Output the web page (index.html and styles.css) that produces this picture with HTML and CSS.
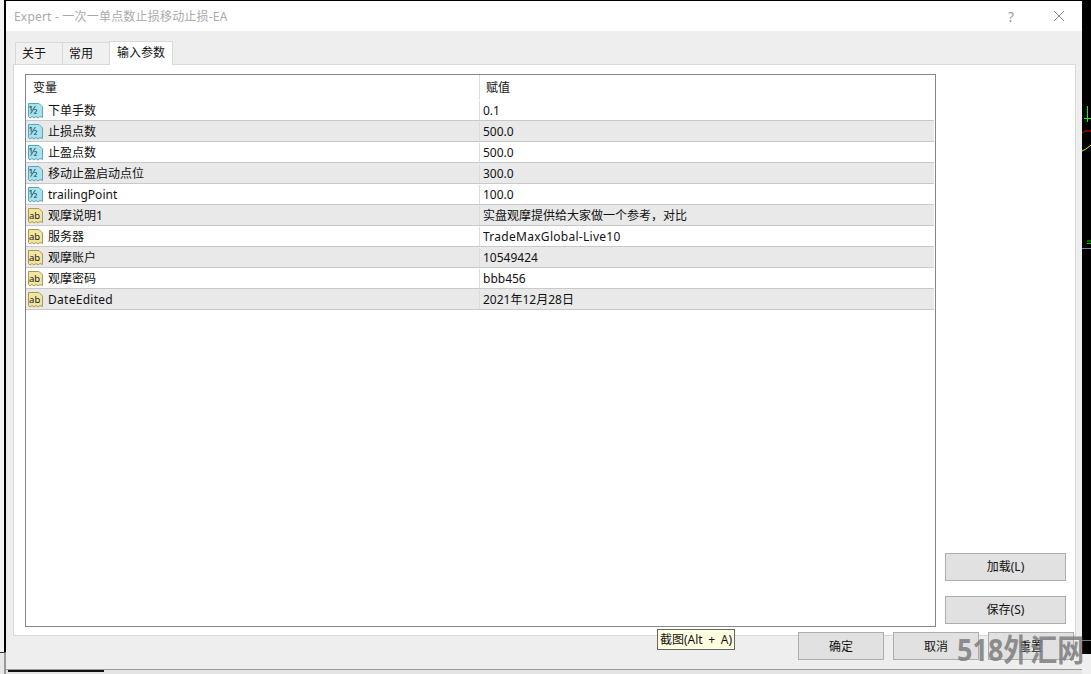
FILE: index.html
```html
<!DOCTYPE html>
<html>
<head>
    <meta charset="utf-8"/>
    <title>Expert - 一次一单点数止损移动止损-EA</title>
    <link rel="stylesheet" href="styles.css">
</head>
<body>
<svg class="defs" width="0" height="0">
    <symbol id="num" viewBox="0 0 17 18">
        <path d="M1.500 1.500H12L15.500 5V15.500L13 14.500L11 16L9 14.500L7 16L5 14.500L3 16L1.500 14.500Z" fill="#a6e3ee" stroke="#5aa5b8"/>
        <text x="2" y="11.500" font-family="Liberation Sans" font-size="11" fill="#134">½</text>
    </symbol>
    <symbol id="str" viewBox="0 0 17 18">
        <path d="M1.500 1.500H12L15.500 5V15.500L13 14.500L11 16L9 14.500L7 16L5 14.500L3 16L1.500 14.500Z" fill="#f3e5a0" stroke="#a89a50"/>
        <text x="2" y="12" font-family="Liberation Sans" font-size="9.500" fill="#222">ab</text>
    </symbol>
</svg>

<div class="left-strip"></div>
<div class="left-tick"></div>
<div class="under-line"></div>
<div class="under-black"></div>
<div class="corner"></div>
<svg class="chart" width="9" height="660" viewBox="0 0 9 660">
    <path d="M5.500 106V122M2 118.500H9" stroke="#0f0" fill="none"/>
    <path d="M0 133L3 131H9" stroke="#e00" fill="none"/>
    <path d="M0 151L4 149L9 145" stroke="#ee0" fill="none"/>
    <path d="M5 241H9M5 243.500H9" stroke="#0c0" fill="none"/>
    <path d="M0 248.500H9" stroke="#789" fill="none"/>
    <path d="M0 640.500H9" stroke="#777" fill="none"/>
</svg>

<div class="window">
    <div class="titlebar">
        <span class="title">Expert - 一次一单点数止损移动止损-EA</span>
        <span class="help">?</span>
        <svg class="close" width="12" height="12" viewBox="0 0 12 12">
            <path d="M1 1L11 11M11 1L1 11" stroke="#8a8a8a" fill="none"/>
        </svg>
    </div>
    <div class="tabs">
        <span class="tab tab-a">关于</span>
        <span class="tab tab-b">常用</span>
        <span class="tab on">输入参数</span>
    </div>
    <div class="panel">
        <div class="grid">
            <div class="head">
                <span class="c-name">变量</span>
                <span class="c-val">赋值</span>
            </div>
            <div class="row"><span class="c-name"><svg class="ico"><use href="#num"/></svg>下单手数</span><span class="c-val">0.1</span></div>
            <div class="row alt"><span class="c-name"><svg class="ico"><use href="#num"/></svg>止损点数</span><span class="c-val">500.0</span></div>
            <div class="row"><span class="c-name"><svg class="ico"><use href="#num"/></svg>止盈点数</span><span class="c-val">500.0</span></div>
            <div class="row alt"><span class="c-name"><svg class="ico"><use href="#num"/></svg>移动止盈启动点位</span><span class="c-val">300.0</span></div>
            <div class="row"><span class="c-name"><svg class="ico"><use href="#num"/></svg>trailingPoint</span><span class="c-val">100.0</span></div>
            <div class="row alt"><span class="c-name"><svg class="ico"><use href="#str"/></svg>观摩说明1</span><span class="c-val">实盘观摩提供给大家做一个参考，对比</span></div>
            <div class="row"><span class="c-name"><svg class="ico"><use href="#str"/></svg>服务器</span><span class="c-val wide">TradeMaxGlobal-Live10</span></div>
            <div class="row alt"><span class="c-name"><svg class="ico"><use href="#str"/></svg>观摩账户</span><span class="c-val">10549424</span></div>
            <div class="row"><span class="c-name"><svg class="ico"><use href="#str"/></svg>观摩密码</span><span class="c-val">bbb456</span></div>
            <div class="row alt"><span class="c-name wide"><svg class="ico"><use href="#str"/></svg>DateEdited</span><span class="c-val">2021年12月28日</span></div>
        </div>
        <div class="side">
            <span class="btn side-btn">加载(L)</span>
            <span class="btn side-btn">保存(S)</span>
        </div>
    </div>
    <div class="footer">
        <span class="btn foot-btn">确定</span>
        <span class="btn foot-btn">取消</span>
        <span class="btn foot-btn">重置</span>
    </div>
</div>

<div class="tip">截图(Alt + A)</div>
<div class="mark">518外汇网</div>
</body>
</html>
```

FILE: styles.css
```css
* {
    margin: 0;
    padding: 0;
    box-sizing: border-box;
    font-family: "Noto Sans", "Noto Sans CJK SC", sans-serif;
}
html, body {
    height: 674px;
    overflow: hidden;
}
body {
    background: #000;
    font-size: 12px;
    color: #111;
}
.defs {
    display: none;
}
.left-strip {
    position: absolute;
    left: 0;
    top: 0;
    width: 4px;
    height: 674px;
    background: #f4f4f4;
}
.left-tick {
    position: absolute;
    left: 0;
    top: 652px;
    width: 6px;
    height: 22px;
    background: #e8e8e8;
    border-top: 1px solid #333;
    border-right: 2px solid #999;
}
.under-line {
    position: absolute;
    left: 6px;
    top: 669px;
    width: 1085px;
    height: 5px;
    background: #e4e4e4;
}
.under-black {
    position: absolute;
    left: 8px;
    top: 670px;
    width: 96px;
    height: 2px;
    background: #111;
}
.corner {
    position: absolute;
    left: 1082px;
    top: 654px;
    width: 9px;
    height: 20px;
    background: #efefef;
}
.chart {
    position: absolute;
    left: 1082px;
    top: 0;
}
.window {
    position: absolute;
    left: 6px;
    top: 1px;
    width: 1076px;
    height: 669px;
    background: #eee;
    border-bottom: 1px solid #9a9a9a;
    display: flex;
    flex-direction: column;
}
.titlebar {
    height: 30px;
    flex: none;
    background: #fff;
    display: flex;
    align-items: center;
    padding: 0 17px 0 8px;
}
.title {
    flex: 1;
    color: #aaa;
    font-size: 12px;
    letter-spacing: .2px;
}
.help {
    color: #9a9a9a;
    font-size: 14px;
    margin-right: 39px;
}
.tabs {
    height: 33px;
    flex: none;
    display: flex;
    align-items: flex-end;
    padding: 0 0 0 9px;
}
.tab {
    height: 22px;
    line-height: 21px;
    padding: 0 6px;
    background: #f0f0f0;
    border: 1px solid #d9d9d9;
    border-bottom: 0;
}
.tab-a {
    width: 48px;
}
.tab-b {
    width: 48px;
    margin-left: -1px;
}
.tab.on {
    width: 64px;
    height: 24px;
    margin-left: -1px;
    margin-bottom: -1px;
    background: #fff;
    position: relative;
    z-index: 1;
    padding: 0 7px;
}
.panel {
    width: 1063px;
    height: 572px;
    flex: none;
    margin-left: 7px;
    background: #fff;
    border: 1px solid #d9d9d9;
    padding: 9px 10px 8px 11px;
    display: flex;
}
.grid {
    width: 911px;
    height: 100%;
    border: 1px solid #85858f;
    flex: none;
}
.head {
    height: 25px;
    display: flex;
    line-height: 25px;
}
.head .c-name {
    padding-left: 7px;
}
.head .c-val {
    padding-left: 6px;
}
.row {
    height: 21px;
    line-height: 20px;
    padding-top: 1px;
    display: flex;
    border-bottom: 1px solid #c9c9c9;
    margin-right: 1px;
}
.row.alt {
    background: #e9e9e9;
}
.c-name {
    width: 453px;
    flex: none;
    display: flex;
    align-items: center;
}
.c-val {
    flex: 1;
    border-left: 1px solid #dcdcdc;
    padding-left: 3px;
}
.wide {
    letter-spacing: .28px;
}
.ico {
    width: 17px;
    height: 18px;
    margin: 0 4px 0 1px;
    flex: none;
}
.side {
    flex: 1;
    display: flex;
    flex-direction: column;
    justify-content: flex-end;
    gap: 15px;
    padding: 0 0 3px 9px;
}
.btn {
    display: block;
    background: #e1e1e1;
    border: 1px solid #adadad;
    text-align: center;
}
.side-btn {
    width: 121px;
    height: 28px;
    line-height: 26px;
}
.footer {
    display: flex;
    gap: 9px;
    justify-content: flex-end;
    margin-top: -4px;
    padding-right: 8px;
    position: relative;
}
.foot-btn {
    width: 86px;
    height: 28px;
    line-height: 27px;
}
.tip {
    position: absolute;
    left: 657px;
    top: 629px;
    width: 78px;
    height: 21px;
    background: #ffffe1;
    border: 1px solid #666;
    line-height: 19px;
    padding-left: 2px;
    white-space: nowrap;
    word-spacing: 2.5px;
}
.mark {
    position: absolute;
    left: 957px;
    top: 628px;
    font-size: 27px;
    line-height: 44px;
    font-weight: 700;
    color: rgba(125, 125, 125, .85);
    white-space: nowrap;
    transform: scaleY(1.12);
}
```
